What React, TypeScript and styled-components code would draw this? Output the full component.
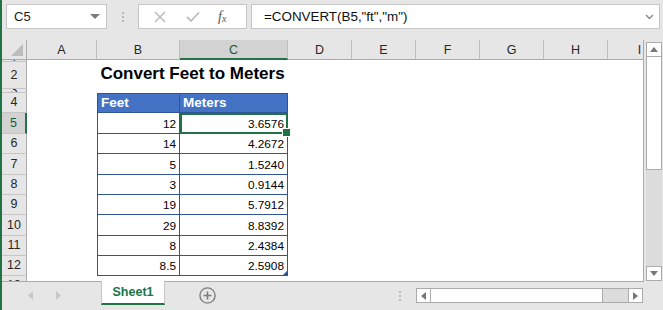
import React from "react";
import styled, { createGlobalStyle, css } from "styled-components";

const GREEN = "#217346";
const TABLE_LINE = "#2f5597";
const HEADER_BG = "#e6e6e6";
const COLS = "25px 70px 83px 108px 64px 64px 64px 64px 64px 64px";
const LETTERS = ["A", "B", "C", "D", "E", "F", "G", "H", "I"];

type Kind = "empty" | "title" | "head" | "data";
type SheetRowData = { n: number; h: number; kind: Kind; feet?: string; meters?: string };

const rows: SheetRowData[] = [
  { n: 1, h: 2, kind: "empty" },
  { n: 2, h: 27, kind: "title" },
  { n: 3, h: 4, kind: "empty" },
  { n: 4, h: 20, kind: "head" },
  { n: 5, h: 21, kind: "data", feet: "12", meters: "3.6576" },
  { n: 6, h: 20, kind: "data", feet: "14", meters: "4.2672" },
  { n: 7, h: 21, kind: "data", feet: "5", meters: "1.5240" },
  { n: 8, h: 20, kind: "data", feet: "3", meters: "0.9144" },
  { n: 9, h: 20, kind: "data", feet: "19", meters: "5.7912" },
  { n: 10, h: 21, kind: "data", feet: "29", meters: "8.8392" },
  { n: 11, h: 20, kind: "data", feet: "8", meters: "2.4384" },
  { n: 12, h: 20, kind: "data", feet: "8.5", meters: "2.5908" },
  { n: 13, h: 20, kind: "empty" },
];

const GlobalStyle = createGlobalStyle`
  html, body { margin: 0; padding: 0; background: #fff; }
  body { font-family: "Liberation Sans", Arial, sans-serif; overflow: hidden; }
  * { box-sizing: border-box; }
`;

export default function App() {
  return (
    <>
      <GlobalStyle />
      <Window>
        <Toolbar>
          <NameBox>
            <span>C5</span>
            <Caret />
          </NameBox>
          <Grip>
            <Dot />
            <Dot />
            <Dot />
          </Grip>
          <FxBox>
            <FxIcon>
              <svg width="12" height="12" viewBox="0 0 12 12">
                <path d="M1 1 L11 11 M11 1 L1 11" stroke="#bdbdbd" strokeWidth="1.6" fill="none" />
              </svg>
            </FxIcon>
            <FxIcon>
              <svg width="14" height="12" viewBox="0 0 14 12">
                <path d="M1 6 L5 10 L13 1.5" stroke="#bdbdbd" strokeWidth="1.8" fill="none" />
              </svg>
            </FxIcon>
            <FxLabel>
              f<sub>x</sub>
            </FxLabel>
          </FxBox>
          <FormulaInput>
            <span>=CONVERT(B5,"ft","m")</span>
            <svg width="9" height="6" viewBox="0 0 9 6">
              <path d="M1 1 L4.5 4.5 L8 1" stroke="#8a8a8a" strokeWidth="1.4" fill="none" />
            </svg>
          </FormulaInput>
        </Toolbar>

        <Middle>
          <Sheet>
            <SheetRow $h={20}>
              <Corner>
                <svg width="12" height="12" viewBox="0 0 12 12">
                  <path d="M12 0 L12 12 L0 12 Z" fill="#bdbdbd" />
                </svg>
              </Corner>
              {LETTERS.map((l) => (
                <ColHead key={l} $selected={l === "C"}>
                  {l}
                </ColHead>
              ))}
            </SheetRow>
            <Body>
              {rows.map((r) => (
                <SheetRow key={r.n} $h={r.h}>
                  <RowHead $selected={r.n === 5}>{r.n}</RowHead>
                  <Cell />
                  {r.kind === "title" && <Title>Convert Feet to Meters</Title>}
                  {r.kind === "head" && (
                    <>
                      <TableCell $first $top $head>
                        Feet
                      </TableCell>
                      <TableCell $top $head>
                        Meters
                      </TableCell>
                    </>
                  )}
                  {r.kind === "data" && (
                    <>
                      <TableCell $first $num>
                        {r.feet}
                      </TableCell>
                      <TableCell $num $selected={r.n === 5} $corner={r.n === 12}>
                        {r.meters}
                      </TableCell>
                    </>
                  )}
                  {r.kind === "empty" && (
                    <>
                      <Cell />
                      <Cell />
                    </>
                  )}
                  {LETTERS.slice(3).map((l) => (
                    <Cell key={l} />
                  ))}
                </SheetRow>
              ))}
            </Body>
          </Sheet>
          <VScroll>
            <ScrollButton>
              <svg width="8" height="5" viewBox="0 0 8 5">
                <path d="M0 5 L4 0 L8 5 Z" fill="#777" />
              </svg>
            </ScrollButton>
            <VThumb />
            <VTrack />
            <ScrollButton>
              <svg width="8" height="5" viewBox="0 0 8 5">
                <path d="M0 0 L8 0 L4 5 Z" fill="#777" />
              </svg>
            </ScrollButton>
          </VScroll>
        </Middle>

        <TabBar>
          <NavArrows>
            <svg width="5" height="9" viewBox="0 0 5 9">
              <path d="M5 0 L0 4.5 L5 9 Z" fill="#c8c8c8" />
            </svg>
            <svg width="5" height="9" viewBox="0 0 5 9">
              <path d="M0 0 L5 4.5 L0 9 Z" fill="#c8c8c8" />
            </svg>
          </NavArrows>
          <SheetTab>Sheet1</SheetTab>
          <AddSheet>
            <svg width="17" height="17" viewBox="0 0 17 17">
              <circle cx="8.5" cy="8.5" r="7.6" stroke="#7d7d7d" strokeWidth="1.4" fill="none" />
              <path d="M8.5 4.5 V12.5 M4.5 8.5 H12.5" stroke="#7d7d7d" strokeWidth="1.6" />
            </svg>
          </AddSheet>
          <Spacer />
          <Grip $small>
            <Dot />
            <Dot />
            <Dot />
          </Grip>
          <HScroll>
            <HButton>
              <svg width="5" height="8" viewBox="0 0 5 8">
                <path d="M5 0 L0 4 L5 8 Z" fill="#777" />
              </svg>
            </HButton>
            <HThumb />
            <HTrack />
            <HButton $right>
              <svg width="5" height="8" viewBox="0 0 5 8">
                <path d="M0 0 L5 4 L0 8 Z" fill="#777" />
              </svg>
            </HButton>
          </HScroll>
        </TabBar>
      </Window>
    </>
  );
}

const Window = styled.div`
  width: 663px;
  height: 310px;
  border-left: 2px solid ${GREEN};
  background: ${HEADER_BG};
  display: flex;
  flex-direction: column;
  overflow: hidden;
`;

const Toolbar = styled.div`
  height: 40px;
  display: flex;
  align-items: flex-start;
  padding: 4px 0 0 4px;
`;

const boxBase = css`
  height: 25px;
  background: #fff;
  border: 1px solid #c6c6c6;
  display: flex;
  align-items: center;
`;

const NameBox = styled.div`
  ${boxBase};
  width: 101px;
  padding: 0 7px;
  justify-content: space-between;
  font-size: 13px;
  color: #222;
`;

const Caret = styled.span`
  width: 0;
  height: 0;
  border-left: 5px solid transparent;
  border-right: 5px solid transparent;
  border-top: 5px solid #7a7a7a;
  margin-right: -1px;
`;

const Grip = styled.div<{ $small?: boolean }>`
  width: ${(p) => (p.$small ? "3px" : "31px")};
  margin-right: ${(p) => (p.$small ? "15px" : "0")};
  height: ${(p) => (p.$small ? "28px" : "25px")};
  display: flex;
  flex-direction: column;
  align-items: center;
  justify-content: center;
  gap: 2px;
`;

const Dot = styled.span`
  width: 2px;
  height: 2px;
  background: #b8b8b8;
`;

const FxBox = styled.div`
  ${boxBase};
  width: 109px;
  padding: 0 4px 0 14px;
  justify-content: space-between;
`;

const FxIcon = styled.span`
  width: 14px;
  display: flex;
  justify-content: center;
`;

const FxLabel = styled.span`
  width: 24px;
  font-family: "Liberation Serif", "Times New Roman", serif;
  font-style: italic;
  font-size: 14px;
  color: #555;
  line-height: 1;

  sub {
    font-size: 10px;
    vertical-align: -1px;
  }
`;

const FormulaInput = styled.div`
  ${boxBase};
  width: 409px;
  margin-left: 4px;
  padding: 0 5px 0 12px;
  justify-content: space-between;
  font-size: 13.4px;
  color: #111;
`;

const Middle = styled.div`
  display: flex;
  height: 242px;
`;

const Sheet = styled.div`
  width: 642px;
  background: #fff;
  border-right: 1px solid #ababab;
  border-bottom: 1px solid #ababab;
  overflow: hidden;
`;

const Body = styled.div`
  height: 221px;
  overflow: hidden;
`;

const SheetRow = styled.div<{ $h: number }>`
  display: grid;
  grid-template-columns: ${COLS};
  height: ${(p) => p.$h}px;
`;

const Corner = styled.div`
  background: ${HEADER_BG};
  border-right: 1px solid #ababab;
  border-bottom: 1px solid #ababab;
  display: flex;
  align-items: flex-end;
  justify-content: flex-end;
  padding: 0 3px 3px 0;
`;

const ColHead = styled.div<{ $selected?: boolean }>`
  background: ${(p) => (p.$selected ? "#d2d2d2" : HEADER_BG)};
  border-right: 1px solid #bfbfbf;
  border-bottom: ${(p) => (p.$selected ? `2px solid ${GREEN}` : "1px solid #ababab")};
  display: flex;
  align-items: center;
  justify-content: center;
  font-size: 12.5px;
  padding-top: ${(p) => (p.$selected ? "1px" : "0")};
  color: ${(p) => (p.$selected ? "#185c37" : "#262626")};
`;

const RowHead = styled.div<{ $selected?: boolean }>`
  background: ${(p) => (p.$selected ? "#d2d2d2" : HEADER_BG)};
  border-right: ${(p) => (p.$selected ? `2px solid ${GREEN}` : "1px solid #ababab")};
  border-bottom: 1px solid #c6c6c6;
  display: flex;
  align-items: center;
  justify-content: center;
  overflow: hidden;
  font-size: 12.5px;
  line-height: 1;
  color: ${(p) => (p.$selected ? "#185c37" : "#262626")};
`;

const Cell = styled.div`
  background: #fff;
`;

const Title = styled.div`
  grid-column: 3 / 5;
  display: flex;
  align-items: flex-end;
  justify-content: center;
  padding-bottom: 5px;
  font-weight: bold;
  font-size: 17px;
  color: #000;
  white-space: nowrap;
`;

const TableCell = styled.div<{
  $first?: boolean;
  $top?: boolean;
  $head?: boolean;
  $num?: boolean;
  $selected?: boolean;
  $corner?: boolean;
}>`
  position: relative;
  display: flex;
  align-items: flex-end;
  justify-content: ${(p) => (p.$num ? "flex-end" : "flex-start")};
  padding: 0 3px 2px;
  white-space: nowrap;
  border-right: 1px solid ${TABLE_LINE};
  border-bottom: 1px solid ${TABLE_LINE};
  border-left: ${(p) => (p.$first ? `1px solid ${TABLE_LINE}` : "none")};
  border-top: ${(p) => (p.$top ? `1px solid ${TABLE_LINE}` : "none")};
  background: ${(p) => (p.$head ? "#4472c4" : "#fff")};
  color: ${(p) => (p.$head ? "#fff" : "#000")};
  font-weight: ${(p) => (p.$head ? "bold" : "normal")};
  font-size: ${(p) => (p.$head ? "13.5px" : "11.8px")};

  ${(p) =>
    p.$selected &&
    css`
      z-index: 1;
      &::after {
        content: "";
        position: absolute;
        left: 0;
        top: 0;
        right: -1px;
        bottom: -1px;
        border: 2px solid ${GREEN};
      }
      &::before {
        content: "";
        position: absolute;
        right: -4px;
        bottom: -4px;
        width: 7px;
        height: 7px;
        background: ${GREEN};
        border: 1px solid #fff;
        z-index: 2;
      }
    `}

  ${(p) =>
    p.$corner &&
    css`
      &::after {
        content: "";
        position: absolute;
        right: 0;
        bottom: 0;
        border-left: 4px solid transparent;
        border-bottom: 4px solid ${TABLE_LINE};
      }
    `}
`;

const VScroll = styled.div`
  flex: 1;
  padding: 2px 1px 1px 2px;
  display: flex;
  flex-direction: column;
`;

const ScrollButton = styled.div`
  height: 15px;
  background: #fff;
  border: 1px solid #ababab;
  display: flex;
  align-items: center;
  justify-content: center;
`;

const VThumb = styled.div`
  height: 113px;
  background: #fff;
  border: 1px solid #ababab;
  border-top: none;
`;

const VTrack = styled.div`
  flex: 1;
  background: #dcdcdc;
`;

const TabBar = styled.div`
  height: 28px;
  display: flex;
  align-items: flex-start;
`;

const NavArrows = styled.div`
  width: 99px;
  height: 26px;
  display: flex;
  align-items: center;
  padding-left: 26px;
  gap: 23px;
`;

const SheetTab = styled.div`
  width: 64px;
  height: 24px;
  margin-top: -1px;
  background: #fff;
  border-left: 1px solid #c6c6c6;
  border-right: 1px solid #c6c6c6;
  border-bottom: 2px solid ${GREEN};
  display: flex;
  align-items: center;
  justify-content: center;
  font-weight: bold;
  font-size: 12.5px;
  color: ${GREEN};
`;

const AddSheet = styled.div`
  margin: 5px 0 0 34px;
  display: flex;
`;

const Spacer = styled.div`
  flex: 1;
`;

const HScroll = styled.div`
  width: 227px;
  height: 15px;
  margin: 6px 20px 0 0;
  display: flex;
`;

const HButton = styled.div<{ $right?: boolean }>`
  width: 15px;
  background: #fff;
  border: 1px solid #ababab;
  display: flex;
  align-items: center;
  justify-content: ${(p) => (p.$right ? "flex-start" : "flex-end")};
  padding: 0 4px;
`;

const HThumb = styled.div`
  width: 172px;
  background: #fff;
  border-top: 1px solid #ababab;
  border-bottom: 1px solid #ababab;
  border-right: 1px solid #ababab;
`;

const HTrack = styled.div`
  flex: 1;
  background: #dcdcdc;
  border-top: 1px solid #ababab;
  border-bottom: 1px solid #ababab;
`;
